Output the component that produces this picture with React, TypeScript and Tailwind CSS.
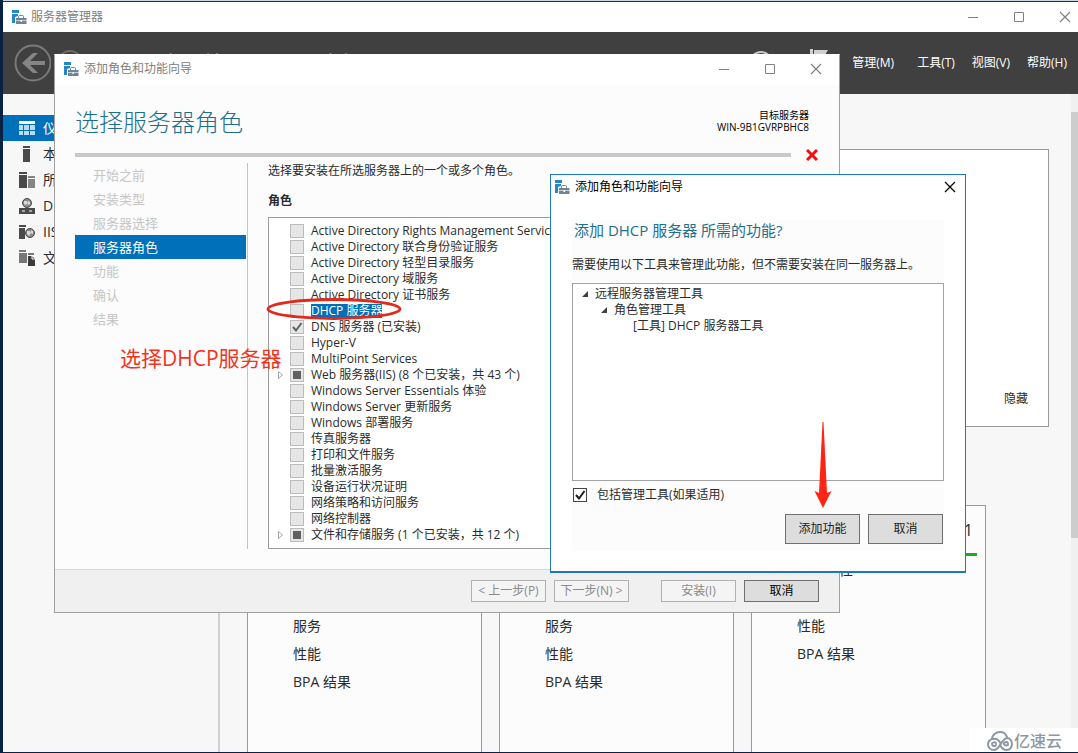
import { useState } from "react";

const fontCls =
  "font-['Open_Sans','Noto_Sans_CJK_SC',sans-serif] text-xs leading-4 text-[#2b2b2b]";

type CheckState = "off" | "on" | "partial";

const roles: { name: string; state: CheckState; expandable?: boolean }[] = [
  { name: "Active Directory Rights Management Services", state: "off" },
  { name: "Active Directory 联合身份验证服务", state: "off" },
  { name: "Active Directory 轻型目录服务", state: "off" },
  { name: "Active Directory 域服务", state: "off" },
  { name: "Active Directory 证书服务", state: "off" },
  { name: "DHCP 服务器", state: "off" },
  { name: "DNS 服务器 (已安装)", state: "on" },
  { name: "Hyper-V", state: "off" },
  { name: "MultiPoint Services", state: "off" },
  {
    name: "Web 服务器(IIS) (8 个已安装，共 43 个)",
    state: "partial",
    expandable: true,
  },
  { name: "Windows Server Essentials 体验", state: "off" },
  { name: "Windows Server 更新服务", state: "off" },
  { name: "Windows 部署服务", state: "off" },
  { name: "传真服务器", state: "off" },
  { name: "打印和文件服务", state: "off" },
  { name: "批量激活服务", state: "off" },
  { name: "设备运行状况证明", state: "off" },
  { name: "网络策略和访问服务", state: "off" },
  { name: "网络控制器", state: "off" },
  {
    name: "文件和存储服务 (1 个已安装，共 12 个)",
    state: "partial",
    expandable: true,
  },
];

const steps = [
  "开始之前",
  "安装类型",
  "服务器选择",
  "服务器角色",
  "功能",
  "确认",
  "结果",
];

const tiles = [
  { count: "1", rows: ["可管理性", "事件", "服务", "性能", "BPA 结果"] },
  { count: "1", rows: ["可管理性", "事件", "服务", "性能", "BPA 结果"] },
  { count: "1", rows: ["可管理性", "服务", "性能", "BPA 结果"] },
];

const sidebar = [
  { label: "仪表板", icon: <DashboardIcon /> },
  { label: "本地服务器", icon: <ServerIcon /> },
  { label: "所有服务器", icon: <ServersIcon /> },
  { label: "DNS", icon: <DnsIcon /> },
  { label: "IIS", icon: <IisIcon /> },
  { label: "文件和存储服务", icon: <StorageIcon /> },
];

export default function App() {
  return (
    <div
      className={`relative flex min-h-screen flex-col overflow-hidden border-b border-l-3 border-[#0a2145] bg-[#f7f7f7] ${fontCls}`}
    >
      <ServerManager />
      <RoleWizard />
      <FeatureDialog />
      <Annotations />
      <Watermark />
    </div>
  );
}

function ServerManager() {
  return (
    <>
      <div className="h-px bg-[#ccd6e6]" />
      <div className="flex h-[31px] items-center border-t border-[#1c2f52] bg-white pr-[7px] pb-px pl-2">
        <AppIcon />
        <span className="ml-1 grow text-[#808080]">服务器管理器</span>
        <WindowButtons />
      </div>

      <header className="flex h-[62px] items-center bg-[#404040] pr-[11px] pl-2.5 text-white">
        <button type="button" aria-label="后退">
          <svg width="38" height="38" viewBox="0 0 38 38" fill="none">
            <circle cx="20" cy="19" r="17.500" stroke="#7a7a7a" strokeWidth="2" />
            <path d="M9 19 20 9h5l-8 8h15v4H17l8 8h-5z" fill="#858585" />
          </svg>
        </button>
        <button type="button" aria-label="前进" className="ml-1">
          <svg width="30" height="30" viewBox="0 0 30 30" fill="none">
            <circle cx="15" cy="15" r="12" stroke="#6b6b6b" strokeWidth="2" />
          </svg>
        </button>
        <h1 className="ml-14 grow text-[21px] font-light">
          服务器管理器 <span className="px-2">·</span> 仪表板
        </h1>
        <svg width="26" height="26" viewBox="0 0 26 26" fill="none">
          <circle cx="13" cy="13" r="11" stroke="#c8c8c8" strokeWidth="2" />
        </svg>
        <svg className="mr-6 ml-9" width="18" height="28" viewBox="0 0 18 28">
          <path d="M0 0h3v28H0zM4 1h14l-3 5 3 5H4z" fill="#d0d0d0" />
        </svg>
        <nav className="flex gap-[17px]">
          <button type="button" className="w-12 text-left">管理(M)</button>
          <button type="button">工具(T)</button>
          <button type="button">视图(V)</button>
          <button type="button">帮助(H)</button>
        </nav>
      </header>

      <div className="flex grow">
        <nav className="w-[217px] shrink-0 border-r-2 border-[#d0d0d0] pt-[21px]">
          {sidebar.map((item, i) => (
            <a
              key={item.label}
              href="#"
              className={
                i === 0
                  ? "flex h-[26px] items-center gap-2 bg-[#0070ba] pl-4 text-sm text-white"
                  : "flex h-[26px] items-center gap-2 pl-4 text-sm"
              }
            >
              {item.icon}
              {item.label}
            </a>
          ))}
        </nav>

        <main className="flex grow flex-col pt-[55px] pr-[22px] pl-[27px]">
          <section className="mb-[78px] flex h-[278px] items-end justify-end border border-[#9a9a9a] bg-white px-5 py-[19px]">
            <button type="button">隐藏</button>
          </section>
          <div className="flex grow gap-[17px]">
            {tiles.map((tile, i) => (
              <section
                key={i}
                className="w-[235px] shrink-0 border border-b-0 border-[#9a9a9a] bg-[#fcfcfc]"
              >
                <p className="mx-2 flex h-[50px] items-center justify-end border-b-3 border-[#1bab26] px-1 text-base">
                  {tile.count}
                </p>
                <ul className="pl-[45px] text-sm leading-7">
                  {tile.rows.map((row) => (
                    <li key={row}>{row}</li>
                  ))}
                </ul>
              </section>
            ))}
          </div>
        </main>

        <div className="w-[7px] shrink-0 bg-[#f0f0f0] pt-[18px]">
          <div className="h-[426px] bg-[#cdcdcd]" />
        </div>
      </div>
    </>
  );
}

function RoleWizard() {
  return (
    <section className="absolute top-[54px] left-[51px] flex h-[559px] w-[786px] flex-col border border-[#a0a0a0] border-t-white bg-[#fcfcfc]">
      <div className="flex h-[30px] items-center bg-white pr-[17px] pb-[3px] pl-2">
        <AppIcon />
        <span className="ml-[5px] grow text-[#808080]">添加角色和功能向导</span>
        <WindowButtons />
      </div>

      <div className="flex h-[65px] justify-between pr-[30px] pl-5">
        <h2 className="pt-[19px] text-2xl leading-9 font-light text-[#1c6f8f]">
          选择服务器角色
        </h2>
        <p className="pt-6 text-right text-[10px] leading-3 text-black">
          目标服务器
          <br />
          WIN-9B1GVRPBHC8
        </p>
      </div>

      <div className="mb-[3px] flex h-2.5 items-center pr-[21px] pl-5">
        <div className="h-1 grow bg-[#c9c9c9]" />
        <svg
          className="ml-[15px]"
          width="12"
          height="12"
          viewBox="0 0 12 12"
          fill="none"
        >
          <path d="m1 1 10 10M11 1 1 11" stroke="#ee1111" strokeWidth="3" />
        </svg>
      </div>

      <div className="flex grow pl-5">
        <ol className="h-[386px] w-[173px] shrink-0 border-r border-[#c4c4c4] text-[13px] leading-6">
          {steps.map((step) => (
            <li
              key={step}
              className={
                step === "服务器角色"
                  ? "mr-px bg-[#0070ba] pl-[18px] text-white"
                  : "pl-[18px] text-[#c6c6c6]"
              }
            >
              {step}
            </li>
          ))}
        </ol>
        <div className="w-[310px] pl-5">
          <p>选择要安装在所选服务器上的一个或多个角色。</p>
          <h3 className="mt-[14px] font-bold">角色</h3>
          <ul className="mt-2 h-[332px] overflow-hidden border border-[#9c9c9c] bg-white py-[5px] whitespace-nowrap">
            {roles.map((role) => (
              <li key={role.name} className="flex h-4 items-center pl-[7px]">
                <span className="w-3.5 shrink-0">
                  {role.expandable && <CollapsedArrow />}
                </span>
                <label className="flex items-center">
                  <RoleCheck state={role.state} />
                  <span
                    className={
                      role.name === "DHCP 服务器"
                        ? "ml-[7px] h-[14px] bg-[#0070ba] leading-[14px] text-white"
                        : "ml-[7px]"
                    }
                  >
                    {role.name}
                  </span>
                </label>
              </li>
            ))}
          </ul>
        </div>
      </div>

      <div className="flex h-[43px] items-center justify-end border-t border-[#d9d9d9] bg-[#f0f0f0] pr-5">
        <button type="button" disabled className={disabledBtnCls}>
          &lt; 上一步(P)
        </button>
        <button type="button" disabled className={`ml-2 ${disabledBtnCls}`}>
          下一步(N) &gt;
        </button>
        <button type="button" disabled className={`ml-8 ${disabledBtnCls}`}>
          安装(I)
        </button>
        <button
          type="button"
          className="ml-2 h-[22px] w-[75px] border border-[#707070] bg-[#dddddd] text-black"
        >
          取消
        </button>
      </div>
    </section>
  );
}

function FeatureDialog() {
  const [includeTools, setIncludeTools] = useState(true);

  return (
    <section
      role="dialog"
      aria-label="添加角色和功能向导"
      className="absolute top-[174px] left-[547px] w-[416px] border border-b-2 border-[#1f78b8] bg-white"
    >
      <div className="flex h-6 items-center pr-[9px] pl-[3px] text-black">
        <AppIcon />
        <span className="ml-[5px] grow">添加角色和功能向导</span>
        <button type="button" aria-label="关闭">
          <CloseIcon />
        </button>
      </div>

      <div className="mx-[21px] mt-[21px] mb-5 bg-[#fcfcfc]">
        <h2 className="pl-0.5 text-[15px] leading-5 text-[#1c6f8f]">
          添加 DHCP 服务器 所需的功能?
        </h2>
        <p className="pt-[17px] pb-[10px] whitespace-nowrap">
          需要使用以下工具来管理此功能，但不需要安装在同一服务器上。
        </p>
        <ul className="h-[198px] border border-[#a3a3a3] bg-white pt-0.5 pl-2">
          <li className="flex items-center gap-1.5">
            <ExpandedArrow />
            远程服务器管理工具
          </li>
          <li className="flex items-center gap-1.5 pl-[19px]">
            <ExpandedArrow />
            角色管理工具
          </li>
          <li className="pl-[52px]">[工具] DHCP 服务器工具</li>
        </ul>
        <label className="flex h-7 items-center pl-px">
          <span className="grid">
            <input
              type="checkbox"
              checked={includeTools}
              onChange={(e) => setIncludeTools(e.target.checked)}
              className="col-start-1 row-start-1 size-3.5 appearance-none border border-[#444444] bg-white"
            />
            {includeTools && <CheckMark color="#1c1c1c" />}
          </span>
          <span className="ml-2.5">包括管理工具(如果适用)</span>
        </label>
        <div className="flex justify-end gap-2 pt-[5px] pr-px pb-[7px]">
          <button type="button" className={dialogBtnCls}>
            添加功能
          </button>
          <button type="button" className={dialogBtnCls}>
            取消
          </button>
        </div>
      </div>
    </section>
  );
}

// Red hand-drawn marks that sit on top of the windows
function Annotations() {
  return (
    <>
      <svg
        className="pointer-events-none absolute top-[297px] left-[263px]"
        width="136"
        height="24"
        viewBox="0 0 136 24"
        fill="none"
      >
        <ellipse cx="68" cy="12" rx="66" ry="9.500" stroke="#e5281c" strokeWidth="2.800" />
      </svg>
      <p className="absolute top-[346px] left-[117px] text-[21px] leading-6 whitespace-nowrap text-[#f0331c]">
        选择DHCP服务器
      </p>
      <svg
        className="pointer-events-none absolute top-[422px] left-[811px]"
        width="18"
        height="86"
        viewBox="0 0 18 86"
      >
        <path d="M8.500 0h1L13 71l4.500-2L9 86 .5 69 5 71z" fill="#ff2414" />
      </svg>
    </>
  );
}

function Watermark() {
  return (
    <div className="absolute right-0 -bottom-px flex h-[25px] w-[109px] items-center gap-px bg-white pl-[18px] text-base font-medium text-[#8f97a3]">
      <svg width="26" height="20" viewBox="0 0 26 20" fill="none">
        <g stroke="#8f97a3" strokeWidth="2" strokeLinecap="round">
          <path d="M5 8C5 4 9 1 13 1c3 0 6 2 7 5" />
          <path d="M14 13c-2-4-5-6-8-5-3 0-5 3-5 5 0 3 2 6 6 6 6 0 7-11 13-12 3 0 5 3 5 6s-2 6-5 6c-4 0-6-3-7-5" />
          <path d="M9 12c-1-1-4-1-4 1s3 3 4 1M17 13c1 2 4 2 4 0s-2-3-4-1" />
        </g>
      </svg>
      亿速云
    </div>
  );
}

const disabledBtnCls =
  "h-[22px] w-[75px] border border-[#b0b0b0] bg-[#f4f4f4] whitespace-nowrap text-[#8a8a8a]";

const dialogBtnCls =
  "h-[30px] w-[75px] border border-[#707070] bg-[#dddddd] text-[#222222]";

function RoleCheck({ state }: { state: CheckState }) {
  return (
    <span className="grid">
      <input
        type="checkbox"
        defaultChecked={state === "on"}
        disabled
        className="col-start-1 row-start-1 size-3.5 appearance-none border border-[#bcbcbc] bg-[#e6e6e6]"
      />
      {state === "on" && <CheckMark color="#606060" />}
      {state === "partial" && (
        <span className="col-start-1 row-start-1 size-2 place-self-center bg-[#606060]" />
      )}
    </span>
  );
}

function CheckMark({ color }: { color: string }) {
  return (
    <svg
      className="pointer-events-none col-start-1 row-start-1"
      width="14"
      height="14"
      viewBox="0 0 14 14"
      fill="none"
    >
      <path d="m3 7 3 3.500L11.500 3" stroke={color} strokeWidth="2" />
    </svg>
  );
}

function CollapsedArrow() {
  return (
    <svg width="8" height="10" viewBox="0 0 8 10" fill="none">
      <path d="M2.500 1.500v7L6.500 5z" stroke="#a6a6a6" />
    </svg>
  );
}

function ExpandedArrow() {
  return (
    <svg width="8" height="8" viewBox="0 0 8 8">
      <path d="M7 1v6H1z" fill="#404040" />
    </svg>
  );
}

function WindowButtons() {
  return (
    <div className="flex gap-[34px] text-[#808080]">
      <button type="button" aria-label="最小化">
        <svg width="12" height="12" viewBox="0 0 12 12" fill="none">
          <path d="M1 6.500h10" stroke="currentColor" />
        </svg>
      </button>
      <button type="button" aria-label="最大化">
        <svg width="12" height="12" viewBox="0 0 12 12" fill="none">
          <path d="M1.500 1.500h9v9h-9z" stroke="currentColor" />
        </svg>
      </button>
      <button type="button" aria-label="关闭">
        <CloseIcon />
      </button>
    </div>
  );
}

function CloseIcon() {
  return (
    <svg width="12" height="12" viewBox="0 0 12 12" fill="none">
      <path d="m1 1 10 10M11 1 1 11" stroke="currentColor" strokeWidth="1.200" />
    </svg>
  );
}

function AppIcon() {
  return (
    <svg width="16" height="16" viewBox="0 0 16 16" fill="none">
      <path d="M1 1h7v3H1zM1 5h6v2L4 8v6H1z" fill="#2487c6" />
      <path d="M7.500 9V7.500q0-1 1-1h3q1 0 1 1V9" stroke="#6f8494" />
      <path d="M5 9h10.500v2H5zM5 12h10.500v3H5z" fill="#6f8494" />
      <path d="M5 11h10.500v1H5z" fill="#c3ced6" />
      <path d="M9.500 11h1.500v2H9.500z" fill="#ffffff" />
    </svg>
  );
}

function DashboardIcon() {
  return (
    <svg width="16" height="16" viewBox="0 0 16 16">
      <path d="M0 1h16v3H0z" fill="#ffffff" />
      <path
        d="M0 5h4v5H0zM5 5h5v5H5zM11 5h5v5h-5zM0 11h4v4H0zM5 11h5v4H5zM11 11h5v4h-5z"
        fill="#b9dcf5"
      />
    </svg>
  );
}

function ServerIcon() {
  return (
    <svg width="16" height="16" viewBox="0 0 16 16" fill="#4a4a4a">
      <path d="M4 0h7v2H4zM4 3h7v13H4z" />
    </svg>
  );
}

function ServersIcon() {
  return (
    <svg width="16" height="16" viewBox="0 0 16 16" fill="#4a4a4a">
      <path d="M0 0h8v2H0zM0 3h8v13H0z" />
      <path d="M9 4h7v2H9zM9 7h7v9H9z" fill="#858585" />
    </svg>
  );
}

function DnsIcon() {
  return (
    <svg width="16" height="16" viewBox="0 0 16 16">
      <circle cx="8" cy="5" r="4.500" fill="#8a8a8a" stroke="#4a4a4a" />
      <path d="M5 3h3l1 2-2 2-2-1zM9 3l2 1v2l-2 1z" fill="#d8d8d8" />
      <path d="M0 10h16v6H0z" fill="#4a4a4a" />
      <path d="M3 13h3M10 13h3" stroke="#ffffff" />
    </svg>
  );
}

function IisIcon() {
  return (
    <svg width="16" height="16" viewBox="0 0 16 16">
      <path d="M0 1h7v2H0zM0 4h6v11H0z" fill="#4a4a4a" />
      <circle cx="11" cy="9" r="4.500" fill="#8a8a8a" stroke="#4a4a4a" />
      <path d="M8 7h3l1 2-2 3-2-2zM12 6l2 1v3l-2-1z" fill="#d8d8d8" />
    </svg>
  );
}

function StorageIcon() {
  return (
    <svg width="16" height="16" viewBox="0 0 16 16">
      <path d="M0 0h7v2H0zM0 3h8v10H0zM9 3h6v2H9z" fill="#777777" />
      <path d="M9 6h4l3 3v7H9z" fill="#3c3c3c" />
      <path d="M13 6v3h3" stroke="#ffffff" fill="none" />
    </svg>
  );
}
